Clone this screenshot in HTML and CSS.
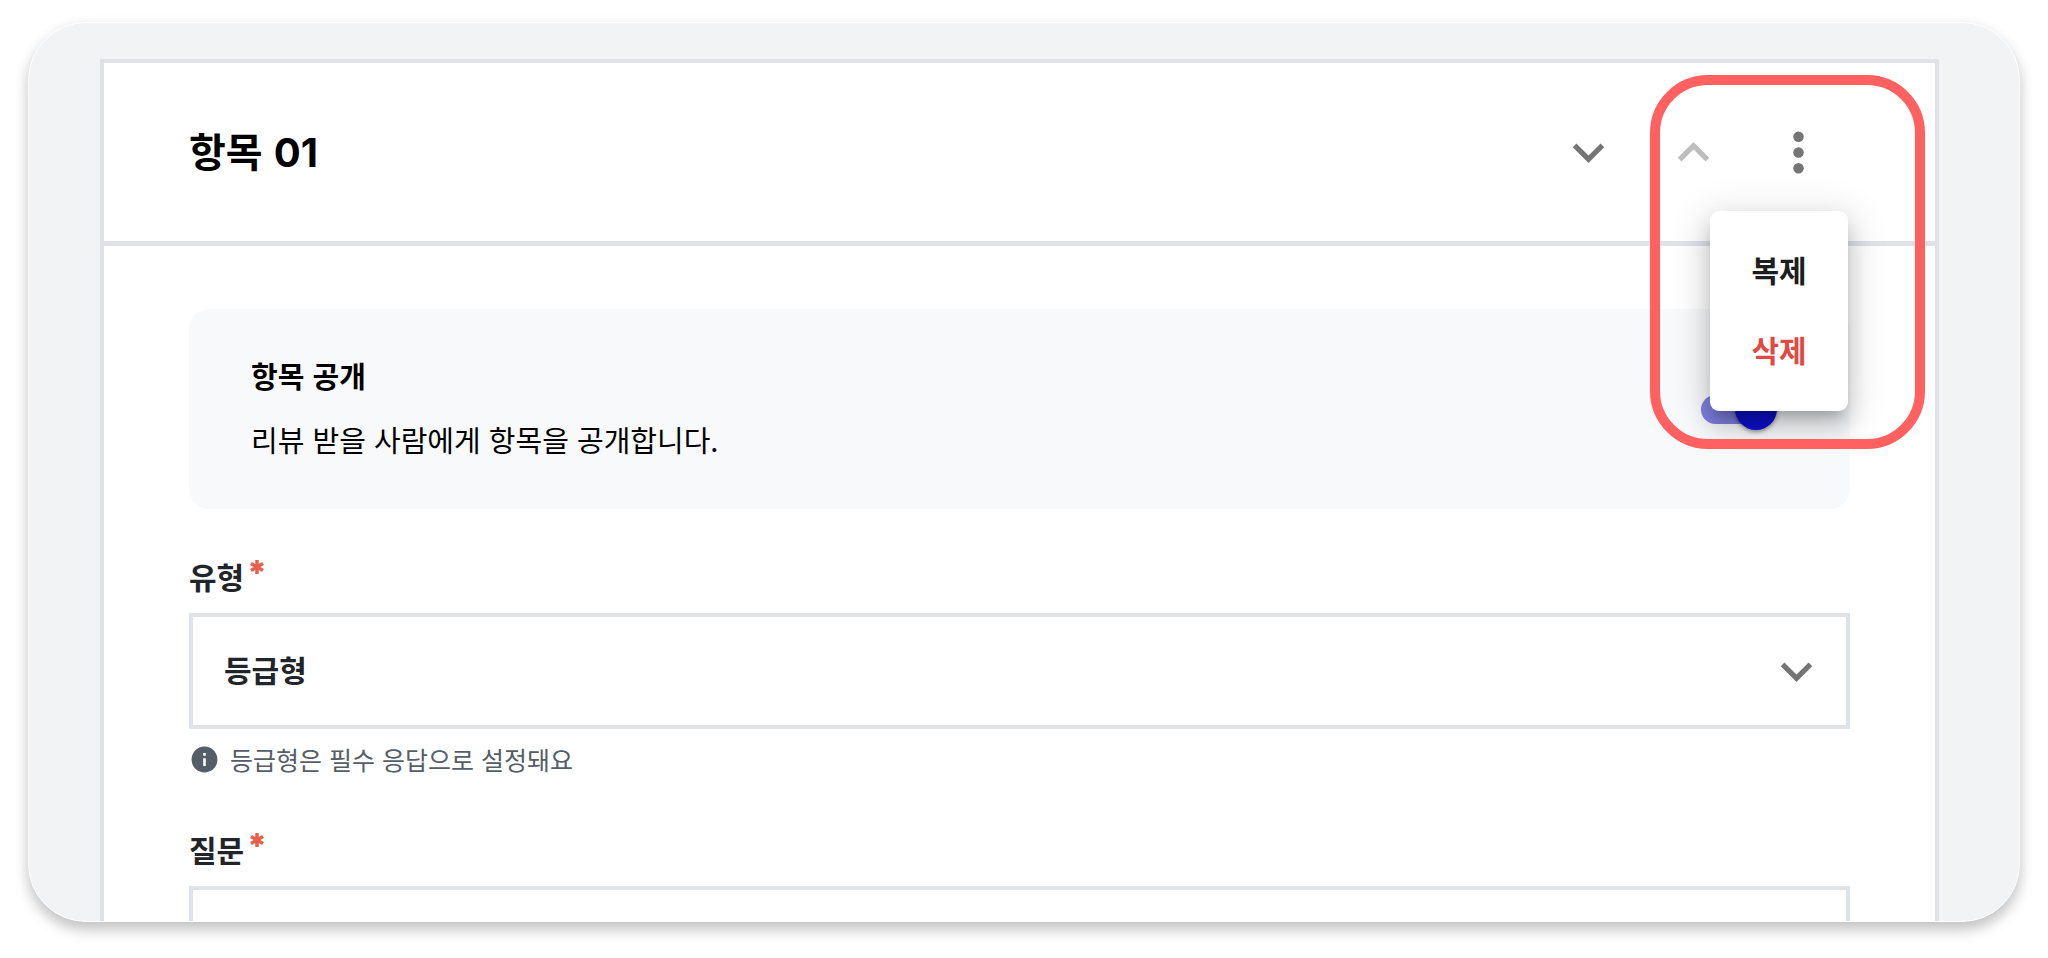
FILE: index.html
```html
<!DOCTYPE html>
<html lang="ko">
<head>
<meta charset="utf-8">
<meta name="viewport" content="width=device-width, initial-scale=1">
<title>항목 01</title>
<link rel="stylesheet" href="styles.css">
</head>
<body>
<main class="frame">
  <section class="card">
    <header class="card-header">
      <h1 class="card-title">항목 <span class="card-number">01</span></h1>
      <div class="actions">
        <button class="icon-button" type="button" aria-label="아래로 이동">
          <svg class="icon" viewBox="0 0 24 24" aria-hidden="true"><path d="M7.41 8.59 12 13.17l4.59-4.58L18 10l-6 6-6-6z"/></svg>
        </button>
        <button class="icon-button" type="button" aria-label="위로 이동" disabled>
          <svg class="icon" viewBox="0 0 24 24" aria-hidden="true"><path d="M7.41 15.41 12 10.83l4.59 4.58L18 14l-6-6-6 6z"/></svg>
        </button>
        <div class="more">
          <button class="icon-button" type="button" aria-label="더보기" aria-haspopup="menu" aria-expanded="true">
            <svg class="icon" viewBox="0 0 24 24" aria-hidden="true"><circle cx="12" cy="6" r="2"/><circle cx="12" cy="12" r="2"/><circle cx="12" cy="18" r="2"/></svg>
          </button>
          <div class="menu" role="menu">
            <button class="menu-item" type="button" role="menuitem">복제</button>
            <button class="menu-item menu-item-danger" type="button" role="menuitem">삭제</button>
          </div>
          <div class="highlight" aria-hidden="true"></div>
        </div>
      </div>
    </header>
    <form class="card-body">
      <div class="notice">
        <div class="notice-text">
          <label class="notice-title" for="visible">항목 공개</label>
          <p class="notice-description">리뷰 받을 사람에게 항목을 공개합니다.</p>
        </div>
        <input class="switch" id="visible" type="checkbox" role="switch" checked>
      </div>
      <div class="field">
        <label class="label" for="type">유형<svg class="required" viewBox="0 0 14 14" aria-hidden="true"><path d="M7 0v14M1 3.5l12 7M13 3.5l-12 7"/></svg></label>
        <div class="select-wrap">
          <select class="control" id="type" required>
            <option>등급형</option>
          </select>
          <svg class="icon select-arrow" viewBox="0 0 24 24" aria-hidden="true"><path d="M7.41 8.59 12 13.17l4.59-4.58L18 10l-6 6-6-6z"/></svg>
        </div>
        <p class="helper">
          <svg class="helper-icon" viewBox="0 0 24 24" aria-hidden="true"><path d="M12 2C6.48 2 2 6.48 2 12s4.48 10 10 10 10-4.48 10-10S17.52 2 12 2zm1 15h-2v-6h2v6zm0-8h-2V7h2v2z"/></svg>
          등급형은 필수 응답으로 설정돼요
        </p>
      </div>
      <div class="field">
        <label class="label" for="question">질문<svg class="required" viewBox="0 0 14 14" aria-hidden="true"><path d="M7 0v14M1 3.5l12 7M13 3.5l-12 7"/></svg></label>
        <input class="control" id="question" type="text" required>
      </div>
    </form>
  </section>
</main>
</body>
</html>
```
FILE: styles.css
```css
* {
  box-sizing: border-box;
}

body {
  margin: 0;
  height: 100vh;
  padding: 22px 28px 36px;
  background: #fff;
  color: #000;
  font-family: "Noto Sans CJK KR", sans-serif;
  font-size: 30px;
  line-height: 64px;
}

button,
input,
select {
  font: inherit;
  color: inherit;
}

h1,
p {
  margin: 0;
}

.frame {
  height: 100%;
  overflow: hidden;
  padding: 36px 80px 0 71px;
  border: 1px solid #fff;
  border-radius: 58px;
  background: #f1f3f5;
  box-shadow: 0 8px 14px rgba(0, 0, 0, 0.2), 0 4px 16px rgba(0, 0, 0, 0.06);
}

.card {
  border: 4px solid #dfe2e7;
  background: #fff;
}

.card-header {
  display: flex;
  align-items: center;
  justify-content: space-between;
  height: 183px;
  padding: 0 84px 0 85px;
  border-bottom: 5px solid #dfe2e7;
}

.card-title {
  padding-bottom: 2px;
  font-size: 40px;
  font-weight: 700;
}

.card-number {
  font-family: Inter, sans-serif;
}

.actions {
  display: flex;
}

.icon-button {
  display: flex;
  padding: 0 21px;
  border: 0;
  background: none;
  color: #757575;
}

.icon-button:disabled {
  color: #bdbdbd;
}

.icon {
  width: 63px;
  height: 63px;
  fill: currentColor;
}

.more {
  position: relative;
}

.menu {
  position: absolute;
  z-index: 1;
  top: 90px;
  right: 3px;
  width: 138px;
  padding: 20px 0;
  border-radius: 9px;
  background: #fff;
  box-shadow: 0 10px 12px -6px rgba(0, 0, 0, 0.2), 0 16px 22px 2px rgba(0, 0, 0, 0.14), 0 6px 36px 6px rgba(0, 0, 0, 0.12);
}

.menu-item {
  display: block;
  width: 100%;
  height: 80px;
  padding: 0 0 4px;
  border: 0;
  background: none;
  color: #1c1e20;
  font-weight: 700;
  text-align: center;
}

.menu-item-danger {
  color: #e04a42;
}

.highlight {
  position: absolute;
  z-index: 2;
  top: -46px;
  right: -74px;
  width: 275px;
  height: 374px;
  border: 10px solid #ff6060;
  border-radius: 58px;
  pointer-events: none;
}

.card-body {
  padding: 63px 85px;
}

.notice {
  display: flex;
  align-items: center;
  justify-content: space-between;
  height: 200px;
  padding: 0 77px 0 62px;
  border-radius: 20px;
  background: #f8f9fb;
}

.notice-text {
  padding-bottom: 4px;
  font-size: 29px;
}

.notice-title {
  display: block;
  font-weight: 700;
}

.switch {
  appearance: none;
  display: flex;
  align-items: center;
  justify-content: flex-end;
  width: 72px;
  height: 29px;
  margin: 0;
  border-radius: 15px;
  background: #7f80e0;
}

.switch::before {
  content: "";
  flex: none;
  width: 42px;
  height: 42px;
  margin-right: -4px;
  border-radius: 50%;
  background: #0d10cc;
  box-shadow: 0 2px 4px rgba(0, 0, 0, 0.4);
}

.field {
  height: 273px;
}

.notice + .field {
  margin-top: 35px;
}

.label {
  display: flex;
  gap: 6px;
  height: 69px;
  color: #212529;
  font-weight: 700;
}

.required {
  width: 14px;
  height: 14px;
  margin-top: 16px;
  fill: none;
  stroke: #e8604c;
  stroke-width: 3.5;
}

.select-wrap {
  display: grid;
  align-items: center;
}

.select-wrap > * {
  grid-area: 1 / 1;
}

.control {
  appearance: none;
  width: 100%;
  height: 116px;
  padding: 0 31px 4px;
  border: 4px solid #dfe2e7;
  border-radius: 0;
  background: #fff;
  color: #212529;
  font-weight: 700;
}

.select-arrow {
  justify-self: end;
  margin-right: 22px;
  color: #757575;
  pointer-events: none;
}

.helper {
  display: flex;
  align-items: center;
  gap: 10px;
  color: #555d66;
  font-size: 25px;
  line-height: 60px;
}

.helper-icon {
  width: 31px;
  height: 31px;
  fill: currentColor;
}
```
